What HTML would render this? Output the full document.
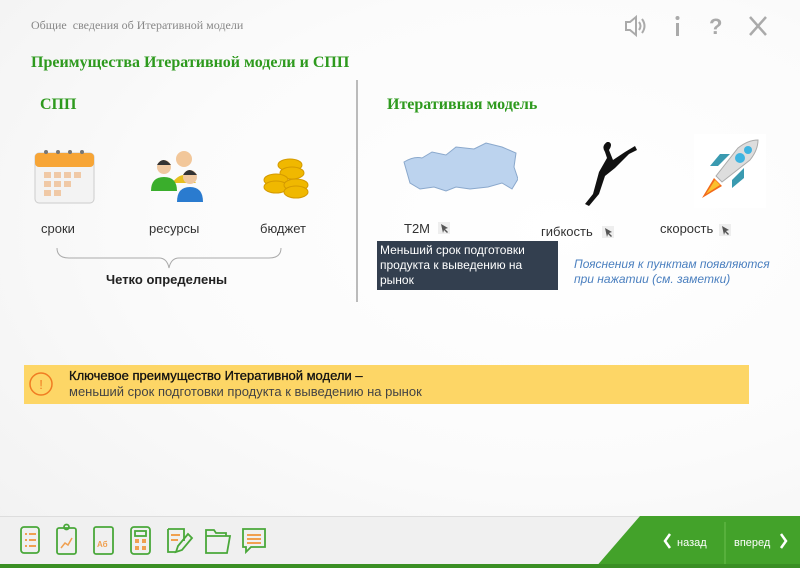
<!DOCTYPE html>
<html><head><meta charset="utf-8"><style>
*{margin:0;padding:0;box-sizing:border-box}
body{width:800px;height:568px;overflow:hidden;position:relative;background:radial-gradient(ellipse at 70% 40%,#fff 0%,#fbfbfb 50%,#f1f1f1 100%);font-family:"Liberation Sans",sans-serif}
.a{position:absolute}
.serif{font-family:"Liberation Serif",serif}
.g{color:#2e9a1e;font-weight:bold}
.lbl{font-size:13px;color:#333}
</style></head><body>
<div class="a serif" style="left:31px;top:18px;font-size:12px;color:#888">Общие&nbsp; сведения об Итеративной модели</div>
<svg class="a" style="left:622px;top:14px" width="150" height="24" viewBox="0 0 150 24">
<g fill="none" stroke="#aaa" stroke-width="2"><path d="M4 8h4l6-5v18l-6-5H4z"/><path d="M17 8q3 4 0 8M20 5q5 7 0 14"/></g>
<rect x="54" y="9" width="3" height="13" fill="#aaa"/><circle cx="55.5" cy="4" r="2" fill="#aaa"/>
<text x="87" y="20" font-size="22" font-weight="bold" fill="#aaa" font-family="Liberation Sans">?</text>
<path d="M128 3l16 18M144 3l-16 18" stroke="#aaa" stroke-width="2.5"/>
</svg>
<div class="a serif g" style="left:31px;top:54px;font-size:16px">Преимущества Итеративной модели и СПП</div>
<div class="a" style="left:356px;top:80px;width:2px;height:222px;background:#bbb"></div>
<div class="a serif g" style="left:40px;top:96px;font-size:16px">СПП</div>
<div class="a serif g" style="left:387px;top:96px;font-size:16px">Итеративная модель</div>
<svg class="a" style="left:34px;top:147px" width="62" height="58"><rect x="1" y="6" width="59" height="50" rx="4" fill="#f3f3f3" stroke="#ccc"/><rect x="1" y="6" width="59" height="14" rx="4" fill="#f7a536"/>
<g fill="#f0c9a6"><rect x="10" y="25" width="7" height="6"/><rect x="20" y="25" width="7" height="6"/><rect x="30" y="25" width="7" height="6"/><rect x="40" y="25" width="7" height="6"/><rect x="10" y="34" width="7" height="6"/><rect x="20" y="34" width="7" height="6"/><rect x="30" y="34" width="7" height="6"/><rect x="10" y="43" width="7" height="6"/><rect x="20" y="43" width="7" height="6"/></g>
<g fill="#777"><circle cx="12" cy="5" r="2"/><circle cx="24" cy="5" r="2"/><circle cx="36" cy="5" r="2"/><circle cx="48" cy="5" r="2"/></g></svg>
<svg class="a" style="left:148px;top:147px" width="60" height="56"><circle cx="36" cy="12" r="8" fill="#f2c79a"/><path d="M24 36q12-16 24 0z" fill="#e8c020"/><circle cx="16" cy="20" r="7" fill="#f0c8a0"/><path d="M3 44q0-14 13-14t13 14z" fill="#3aae2c"/><circle cx="42" cy="30" r="7" fill="#f0c8a0"/><path d="M29 55q0-15 13-15t13 15z" fill="#2a7bcf"/><path d="M9 18q6-10 14 0" fill="#333"/><path d="M35 28q6-10 14 0" fill="#333"/></svg>
<svg class="a" style="left:262px;top:155px" width="48" height="46"><g fill="#f0b800" stroke="#d49a00"><ellipse cx="28" cy="10" rx="12" ry="6"/><ellipse cx="30" cy="18" rx="12" ry="6"/><ellipse cx="14" cy="25" rx="12" ry="6"/><ellipse cx="14" cy="32" rx="12" ry="6"/><ellipse cx="34" cy="30" rx="12" ry="6"/><ellipse cx="34" cy="37" rx="12" ry="6"/></g></svg>
<div class="a lbl" style="left:41px;top:221px">сроки</div>
<div class="a lbl" style="left:149px;top:221px">ресурсы</div>
<div class="a lbl" style="left:260px;top:221px">бюджет</div>
<svg class="a" style="left:55px;top:246px" width="230" height="24"><path d="M2 2q0 10 12 10h90q8 0 10 10q2-10 10-10h90q12 0 12-10" fill="none" stroke="#aaa"/></svg>
<div class="a" style="left:106px;top:272px;font-size:13px;font-weight:bold;color:#222">Четко определены</div>
<svg class="a" style="left:402px;top:140px" width="116" height="60"><path d="M2 22q10-6 18-4l10-6 14 3 10-8 18 2 12-6 16 4 14 6 -2 14 4 12-6 10-10-6-14 4-18 2-14-2-10 4-12-4-14 2-10-6z" fill="#bcd3ee" stroke="#8aa8cc"/></svg>
<svg class="a" style="left:577px;top:138px" width="62" height="68"><path d="M30 4q-6 4 -2 10l2 6-8 14-6 22-8 10 4 2 10-12 6-18 10-8 14-14 8-4-2-4-10 6-12 8-4-10q4-6 0-8z" fill="#111"/></svg>
<div class="a" style="left:694px;top:134px;width:72px;height:74px;background:#fff"></div>
<svg class="a" style="left:696px;top:136px" width="68" height="68"><path d="M6 62l12-20 8 8z" fill="#f26a1b"/><path d="M10 58l9-14 5 5z" fill="#fbc02d"/><path d="M20 40l22-28q10-8 20-8q0 10-8 20l-28 22z" fill="#ddd" stroke="#aaa"/><circle cx="44" cy="22" r="5" fill="#3fb4e0"/><circle cx="52" cy="14" r="4" fill="#3fb4e0"/><path d="M22 30l-8 0 10-12 10 0zM36 44l0 8 12-10 0-10z" fill="#3a9ab0"/></svg>
<div class="a lbl" style="left:404px;top:221px">T2M</div>
<div class="a lbl" style="left:541px;top:224px">гибкость</div>
<div class="a lbl" style="left:660px;top:221px">скорость</div>
<svg class="a" style="left:438px;top:222px" width="12" height="12"><rect width="12" height="12" fill="#eee"/><path d="M3 2l7 4-3 1 3 3-1 1-3-3-1 3z" fill="#555"/></svg>
<svg class="a" style="left:602px;top:226px" width="12" height="12"><rect width="12" height="12" fill="#eee"/><path d="M3 2l7 4-3 1 3 3-1 1-3-3-1 3z" fill="#555"/></svg>
<svg class="a" style="left:719px;top:224px" width="12" height="12"><rect width="12" height="12" fill="#eee"/><path d="M3 2l7 4-3 1 3 3-1 1-3-3-1 3z" fill="#555"/></svg>
<div class="a" style="left:377px;top:241px;width:181px;height:49px;background:#333f4f;color:#fff;font-size:12px;line-height:15px;padding:2px 3px">Меньший срок подготовки продукта к выведению на рынок</div>
<div class="a" style="left:574px;top:257px;font-size:12px;font-style:italic;color:#4a7fbf;line-height:14.5px">Пояснения к пунктам появляются<br>при нажатии (см. заметки)</div>
<div class="a" style="left:24px;top:365px;width:725px;height:39px;background:#fdd666"></div>
<svg class="a" style="left:27px;top:370px" width="28" height="28"><circle cx="14" cy="14" r="11" fill="none" stroke="#f07c22" stroke-width="1.5"/><text x="14" y="19" text-anchor="middle" font-size="13" fill="#f07c22" font-family="Liberation Sans">!</text></svg>
<div class="a" style="left:69px;top:368px;font-size:13px;color:#222;line-height:16px"><span style="color:#111;-webkit-text-stroke:0.3px #111">Ключевое преимущество Итеративной модели –</span><br><span style="color:#444">меньший срок подготовки продукта к выведению на рынок</span></div>
<div class="a" style="left:0;top:516px;width:800px;height:52px;background:#f0f0f0;border-top:1px solid #ddd"></div>
<svg class="a" style="left:0;top:514px" width="800" height="54"><path d="M595 54L640 2H800V54z" fill="#43a22a"/><rect x="0" y="50" width="800" height="4" fill="#3a8f24"/><line x1="725" y1="8" x2="725" y2="50" stroke="#6bbf4f"/>
<path d="M670 20l-5 7 5 7" fill="none" stroke="#fff" stroke-width="2.5"/><path d="M781 20l5 7-5 7" fill="none" stroke="#fff" stroke-width="2.5"/>
<text x="677" y="32" font-size="11" fill="#fff" font-family="Liberation Sans">назад</text><text x="734" y="32" font-size="11" fill="#fff" font-family="Liberation Sans">вперед</text>
<g fill="none" stroke="#4aa83a" stroke-width="1.8">
<rect x="21" y="13" width="18" height="26" rx="3"/>
<rect x="57" y="14" width="19" height="26" rx="2"/><circle cx="66.5" cy="13" r="2.5"/>
<rect x="94" y="13" width="19" height="27" rx="2"/>
<rect x="131" y="13" width="19" height="27" rx="3"/><rect x="135" y="17" width="11" height="5"/>
<path d="M168 15h16v12M168 15v23h8"/><path d="M176 38l2-6 10-12 4 4-10 12z"/>
<path d="M206 22h24l-3 17h-21zM206 22v-6h8l2 3h10v3"/>
<path d="M243 15h22v18h-14l-5 5v-5h-3z"/></g>
<g fill="#f0a050"><rect x="25" y="19" width="2" height="2"/><rect x="29" y="19" width="7" height="2"/><rect x="25" y="25" width="2" height="2"/><rect x="29" y="25" width="7" height="2"/><rect x="25" y="31" width="2" height="2"/><rect x="29" y="31" width="7" height="2"/>
<path d="M61 34l4-5 3 2 4-7" stroke="#f0a050" fill="none" stroke-width="1.5"/>
<text x="97" y="33" font-size="8" font-weight="bold" font-family="Liberation Sans">Аб</text>
<rect x="135" y="25" width="4" height="4"/><rect x="142" y="25" width="4" height="4"/><rect x="135" y="32" width="4" height="4"/><rect x="142" y="32" width="4" height="4"/>
<rect x="171" y="20" width="9" height="2"/><rect x="171" y="25" width="7" height="2"/>
<rect x="247" y="20" width="14" height="2"/><rect x="247" y="24" width="14" height="2"/><rect x="247" y="28" width="14" height="2"/></g>
</svg>
</body></html>
